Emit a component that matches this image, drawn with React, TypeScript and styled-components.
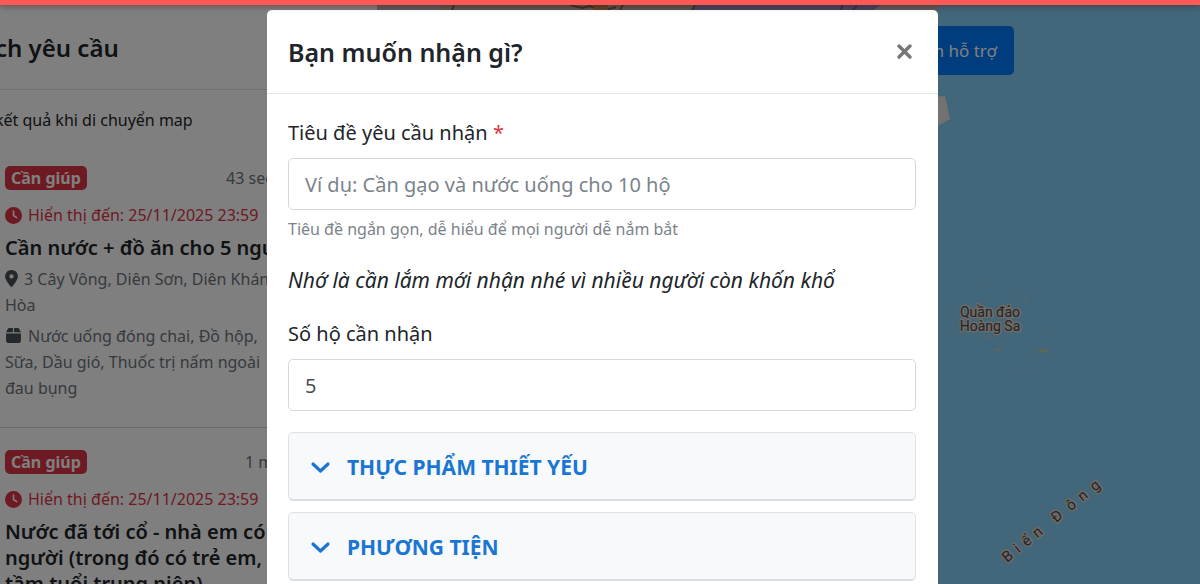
import React, { useState } from "react";
import styled, { createGlobalStyle } from "styled-components";
import { FaBox, FaClock } from "react-icons/fa6";

const sans = `"Noto Sans", "Open Sans", "Liberation Sans", sans-serif`;

const GlobalStyle = createGlobalStyle`
  *, *::before, *::after { box-sizing: border-box; }
  body {
    margin: 0;
    overflow: hidden;
    font-family: ${sans};
    color: #212529;
    background: #fff;
  }
  h1, h2, h3, p { margin: 0; }
  button, input { font-family: inherit; }
`;

const Page = styled.div`
  display: grid;
  grid-template-columns: 377px 1fr;
  height: 100vh;
  overflow: hidden;
`;

const Sidebar = styled.aside`
  background: #fff;
  overflow: hidden;
  white-space: nowrap;
`;

const SidebarHeader = styled.header`
  height: 90px;
  padding-top: 6px;
  display: flex;
  align-items: center;
  border-bottom: 1px solid #dee2e6;
`;

const SidebarTitle = styled.h1`
  margin-left: -5px;
  font-size: 24px;
  line-height: 32px;
  font-weight: 600;
`;

const FilterRow = styled.p`
  height: 54px;
  margin-left: -5px;
  padding-top: 17px;
  font-size: 16px;
  line-height: 26px;
`;

const Request = styled.article`
  padding: 22px 11px 26px 5px;
  border-bottom: 1px solid #ced4da;
`;

const RequestTop = styled.div`
  display: flex;
  justify-content: space-between;
  align-items: center;
  height: 24px;
  margin-bottom: 12px;
`;

const Badge = styled.span`
  padding: 0 6px;
  border-radius: 5px;
  background: #dc3545;
  color: #fff;
  font-size: 16px;
  line-height: 24px;
  font-weight: 700;
`;

const Age = styled.time<{ $width: number }>`
  width: ${(p) => p.$width}px;
  color: #6c757d;
  font-size: 16px;
  line-height: 26px;
`;

const Expiry = styled.p`
  display: flex;
  align-items: center;
  gap: 6px;
  margin-bottom: 7px;
  color: #dc3545;
  font-size: 16px;
  line-height: 26px;
`;

const RequestTitle = styled.h3`
  margin-bottom: 5px;
  font-size: 20px;
  line-height: 26px;
  font-weight: 600;
  white-space: pre-line;
`;

const Detail = styled.p`
  margin-bottom: 5px;
  color: #6c757d;
  font-size: 16px;
  line-height: 26px;
  white-space: pre-line;

  &:last-child { margin-bottom: 0; }
  svg {
    margin-right: 6px;
    vertical-align: -2px;
    color: #495057;
  }
`;

const MapArea = styled.main`
  position: relative;
  overflow: hidden;
  background: #84ccf4;
`;

const MapDrawing = styled.svg`
  display: block;
`;

const SupportButton = styled.button`
  position: absolute;
  top: 26px;
  left: 463px;
  width: 174px;
  height: 49px;
  padding: 0 17px;
  border: 0;
  border-radius: 5px;
  background: #007bff;
  color: #fff;
  font-size: 17px;
  text-align: right;
`;

const TopBar = styled.div`
  position: fixed;
  inset: 0 0 auto;
  z-index: 3;
  height: 5px;
  background: #fc5856;
  box-shadow: 0 1px 6px rgba(60, 10, 10, 0.5);
`;

const Backdrop = styled.div`
  position: fixed;
  inset: 0;
  z-index: 2;
  display: flex;
  justify-content: center;
  align-items: flex-start;
  padding: 10px 0 0 5px;
  overflow: hidden;
  background: rgba(0, 0, 0, 0.5);
`;

const Dialog = styled.section`
  width: 100%;
  max-width: 671px;
  min-height: 100%;
  border-radius: 5px;
  background: #fff;
`;

const DialogHeader = styled.header`
  display: flex;
  justify-content: space-between;
  align-items: center;
  height: 84px;
  padding: 0 21px;
  border-bottom: 1px solid #e4e7ea;
`;

const DialogTitle = styled.h2`
  font-size: 25px;
  line-height: 34px;
  font-weight: 600;
`;

const CloseButton = styled.button`
  display: flex;
  padding: 4px;
  border: 0;
  background: none;
  color: #777;
`;

const Form = styled.form`
  padding: 23px 22px 24px 21px;
`;

const Label = styled.label`
  display: block;
  margin-bottom: 9px;
  font-size: 20px;
  line-height: 32px;
`;

const Required = styled.span`
  color: #dc3545;
`;

const TextInput = styled.input`
  display: block;
  width: 100%;
  height: 52px;
  padding: 1px 16px 0;
  border: 1px solid #d4d8dc;
  border-radius: 5px;
  background: #fff;
  color: #495057;
  font-size: 20px;

  &::placeholder { color: #7b838a; opacity: 1; }
`;

const Hint = styled.p`
  margin: 6px 0 22px;
  color: #7b838a;
  font-size: 16px;
  line-height: 26px;
`;

const Reminder = styled.p`
  margin-bottom: 22px;
  font-size: 21px;
  line-height: 32px;
  font-style: italic;
`;

const Groups = styled.div`
  display: grid;
  gap: 11px;
  margin-top: 21px;
`;

const GroupButton = styled.button`
  display: flex;
  align-items: center;
  gap: 16px;
  width: 100%;
  height: 69px;
  padding: 2px 21px 0;
  border: 1px solid #dfe2e5;
  border-bottom: 2px solid #dadddf;
  border-radius: 5px;
  background: #f7f9fb;
  color: #1976d2;
  font-size: 21px;
  font-weight: 700;
  text-align: left;
`;

interface RequestData {
  age: string;
  ageWidth: number;
  title: string;
  address?: string;
  goods?: string;
}

const requests: RequestData[] = [
  {
    age: "43 seconds ago",
    ageWidth: 140,
    title: "Cần nước + đồ ăn cho 5 người",
    address: "3 Cây Vông, Diên Sơn, Diên Khánh,\nHòa",
    goods: "Nước uống đóng chai, Đồ hộp,\nSữa, Dầu gió, Thuốc trị nấm ngoài\nđau bụng",
  },
  {
    age: "1 minute ago",
    ageWidth: 121,
    title: "Nước đã tới cổ - nhà em có\nngười (trong đó có trẻ em,\ntầm tuổi trung niên)",
  },
];

function PinIcon() {
  return (
    <svg width="13" height="17" viewBox="0 0 384 512" fill="currentColor" aria-hidden="true">
      <path d="M216 499C267 435 384 279 384 192C384 86 298 0 192 0S0 86 0 192c0 87 117 243 168 307c12 15 36 15 48 0zM192 128a64 64 0 1 1 0 128 64 64 0 1 1 0-128z" />
    </svg>
  );
}

function RequestItem({ data }: { data: RequestData }) {
  return (
    <Request>
      <RequestTop>
        <Badge>Cần giúp</Badge>
        <Age $width={data.ageWidth}>{data.age}</Age>
      </RequestTop>
      <Expiry>
        <FaClock size={17} />
        Hiển thị đến: 25/11/2025 23:59
      </Expiry>
      <RequestTitle>{data.title}</RequestTitle>
      {data.address && (
        <Detail>
          <PinIcon />
          {data.address}
        </Detail>
      )}
      {data.goods && (
        <Detail>
          <FaBox size={17} />
          {data.goods}
        </Detail>
      )}
    </Request>
  );
}

function SeaMap() {
  return (
    <MapDrawing width="823" height="584" viewBox="377 0 823 584" aria-label="Biển Đông">
      <path d="M377 0H945L935 14H377Z" fill="#b9b9b9" />
      <path d="M440 0H700V14H440Z" fill="#aeb29a" />
      <path d="M570 5l12 3 8-2 12 5 14-4" stroke="#6f6552" strokeWidth="2" fill="none" />
      <path d="M594 5h14v6h-14z" fill="#b98a55" />
      <path d="M690 10l8-6h184l-14 10H690Z" fill="#8490be" />
      <path d="M692 10l3-5M452 10l2-5M620 10l3-5M840 11l3-6M852 12l5-7" stroke="#6b6b60" strokeWidth="2" />
      <path d="M920 98L945 96L950 119L938 126L920 124Z" fill="#e4e4e2" />
      <g fill="none" stroke="#b8cfd0" strokeWidth="1">
        <path d="M1020 291l5 0M1024 296l3 3-2 5-3-1M976 283l2 2M981 341l5-3 6-1M994 338l3-1M1048 329l1 2M1023 372l2-2" />
      </g>
      <path d="M1037 352l4-3 7 0-2 3-6 1Z" fill="#c3ccae" />
      <path d="M994 350l4-2 3 2-4 1Z" fill="#c3ccae" />
      <g
        fontFamily='Roboto, "Liberation Sans", sans-serif'
        fill="#4a4a4a"
        stroke="#dcd4cc"
        strokeWidth="3"
        strokeLinejoin="round"
        paintOrder="stroke"
      >
        <text x="990" y="317" fontSize="14" textAnchor="middle">Quần đảo</text>
        <text x="990" y="331" fontSize="14" textAnchor="middle">Hoàng Sa</text>
        <text
          transform="translate(1007 563) rotate(-39)"
          fontSize="15"
          x="0 15 25 39 63 82 97 113"
        >
          BiểnĐông
        </text>
      </g>
    </MapDrawing>
  );
}

function CloseIcon() {
  return (
    <svg width="17" height="17" viewBox="0 0 17 17" aria-hidden="true">
      <path d="M3 3L14 14M14 3L3 14" stroke="currentColor" strokeWidth="3.5" strokeLinecap="round" />
    </svg>
  );
}

function ChevronIcon() {
  return (
    <svg width="21" height="21" viewBox="0 0 21 21" fill="none" aria-hidden="true">
      <path
        d="M3 7L10.5 14L18 7"
        stroke="currentColor"
        strokeWidth="3.2"
        strokeLinecap="round"
        strokeLinejoin="round"
      />
    </svg>
  );
}

export default function App() {
  const [households, setHouseholds] = useState("5");
  return (
    <>
      <GlobalStyle />
      <TopBar />
      <Page>
        <Sidebar>
          <SidebarHeader>
            <SidebarTitle>ch yêu cầu</SidebarTitle>
          </SidebarHeader>
          <FilterRow>kết quả khi di chuyển map</FilterRow>
          {requests.map((r) => (
            <RequestItem key={r.title} data={r} />
          ))}
        </Sidebar>
        <MapArea>
          <SeaMap />
          <SupportButton type="button">Điểm hỗ trợ</SupportButton>
        </MapArea>
      </Page>
      <Backdrop>
        <Dialog role="dialog" aria-modal="true" aria-labelledby="dialog-title">
          <DialogHeader>
            <DialogTitle id="dialog-title">Bạn muốn nhận gì?</DialogTitle>
            <CloseButton type="button" aria-label="Đóng">
              <CloseIcon />
            </CloseButton>
          </DialogHeader>
          <Form>
            <Label htmlFor="request-title">
              Tiêu đề yêu cầu nhận <Required>*</Required>
            </Label>
            <TextInput id="request-title" placeholder="Ví dụ: Cần gạo và nước uống cho 10 hộ" />
            <Hint>Tiêu đề ngắn gọn, dễ hiểu để mọi người dễ nắm bắt</Hint>
            <Reminder>Nhớ là cần lắm mới nhận nhé vì nhiều người còn khốn khổ</Reminder>
            <Label htmlFor="households">Số hộ cần nhận</Label>
            <TextInput
              id="households"
              inputMode="numeric"
              value={households}
              onChange={(e) => setHouseholds(e.target.value)}
            />
            <Groups>
              <GroupButton type="button">
                <ChevronIcon />
                THỰC PHẨM THIẾT YẾU
              </GroupButton>
              <GroupButton type="button">
                <ChevronIcon />
                PHƯƠNG TIỆN
              </GroupButton>
            </Groups>
          </Form>
        </Dialog>
      </Backdrop>
    </>
  );
}
